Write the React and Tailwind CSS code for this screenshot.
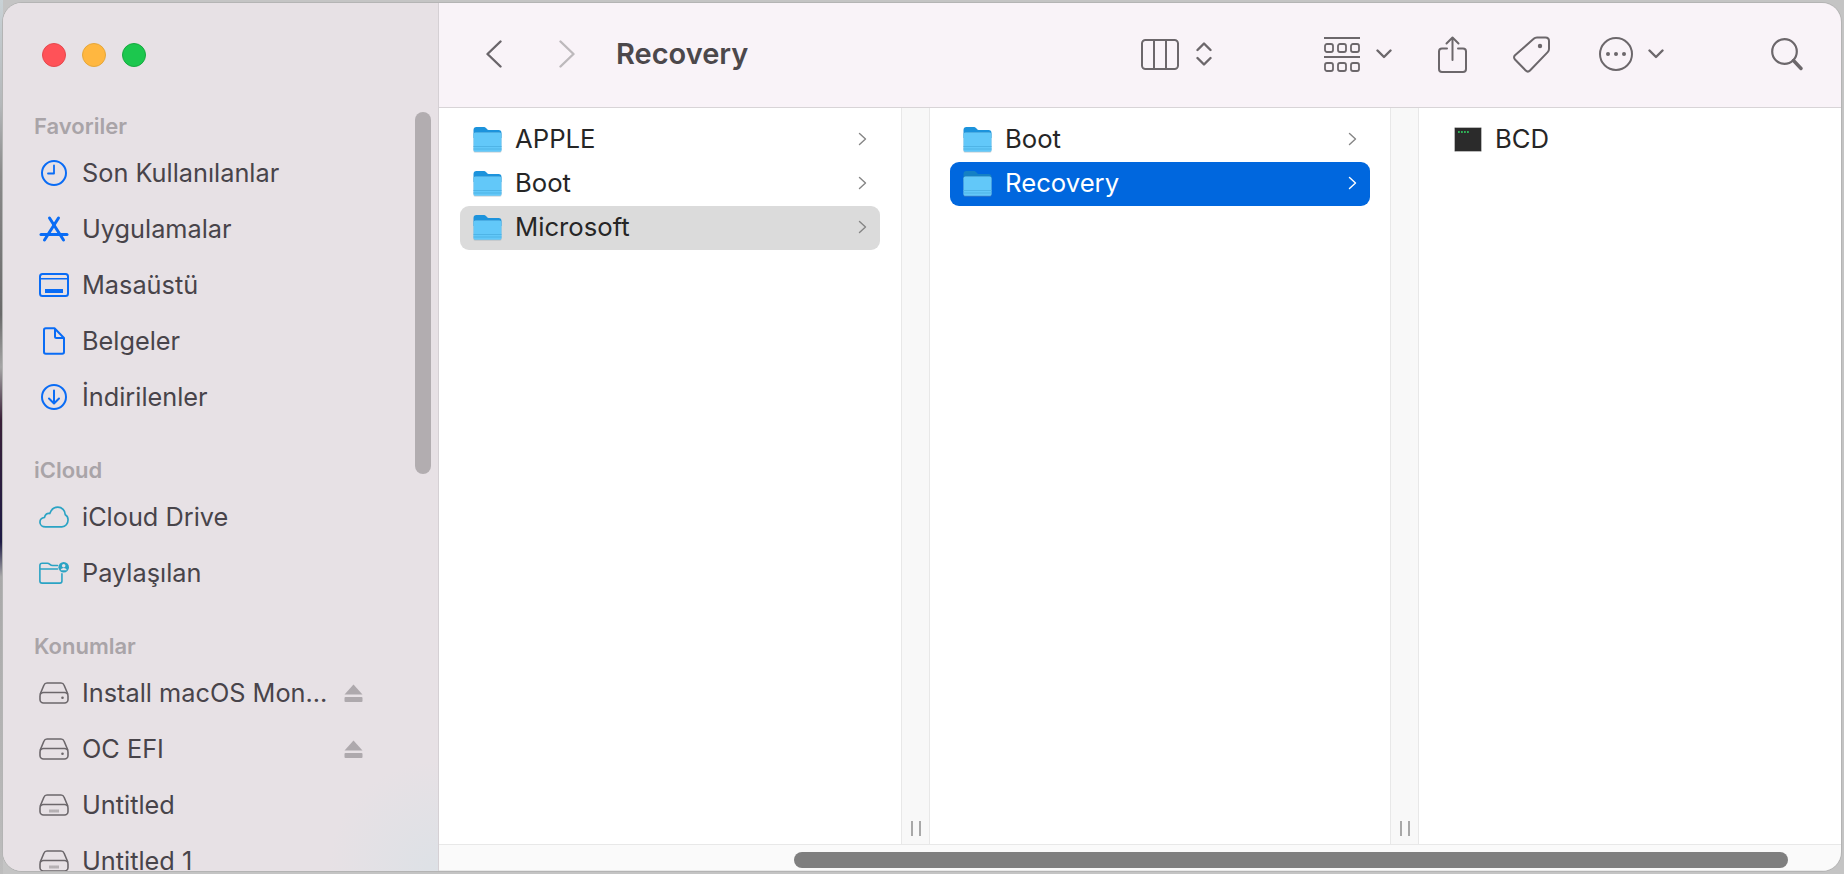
function Folder({ selected }) {
  return (
    <svg className="shrink-0" width="29" height="27" viewBox="0 0 29 27">
      <path d="M0.5 4c0-2 1-3 3-3h7c1.500 0 2 .5 3 1.500s1.500 1.500 3 1.500h9c2 0 3 1 3 3v5H.5z" fill={selected ? "#1580c4" : "#1c93dc"} />
      <rect x="0.500" y="6.500" width="28" height="20" rx="1.500" fill="#8a9aa3" opacity="0.500" />
      <path d="M0.500 8.500c0-1.200.8-2 2-2h24c1.200 0 2 .8 2 2v15.500c0 1-.8 1.800-2 1.800h-24c-1.200 0-2-.8-2-1.800z" fill="#62c8f9" />
      <rect x="0.500" y="20" width="28" height="1" fill="#4fb4e6" />
      <rect x="0.500" y="22.500" width="28" height="1" fill="#4fb4e6" />
    </svg>
  );
}

function TerminalFile() {
  return (
    <svg className="shrink-0" width="28" height="25" viewBox="0 0 28 25">
      <rect x="0.500" y="0.500" width="27" height="24" rx="1" fill="#2b2b2b" stroke="#b9b9b9" />
      <rect x="4" y="4" width="1.800" height="2" fill="#2fb457" />
      <rect x="7" y="4" width="1.800" height="2" fill="#2fb457" />
      <rect x="10" y="4" width="1.800" height="2" fill="#2fb457" />
      <rect x="13" y="4" width="1.800" height="2" fill="#2fb457" />
    </svg>
  );
}

function RowChevron({ selected }) {
  return (
    <svg width="9" height="14" viewBox="0 0 9 14" fill="none" stroke={selected ? "#ffffff" : "#858585"} strokeWidth="1.400" strokeLinecap="round" strokeLinejoin="round">
      <path d="M1.500 1.500 7.500 7l-6 5.500" />
    </svg>
  );
}

function Row({ name, active, selected, icon }) {
  return (
    <div
      className={
        "flex h-[44px] items-center rounded-[9px] pb-[2px] pl-[13px] pr-[13px] " +
        (selected ? "bg-[#0067de] text-white " : active ? "bg-[#dbdbdb] text-[#262626] " : "text-[#262626] ")
      }
    >
      {icon || <Folder selected={selected} />}
      <span className="ml-[13px] flex-1 text-[25.700px] leading-none">{name}</span>
      {!icon && <RowChevron selected={selected} />}
    </div>
  );
}

function Gutter() {
  return (
    <div className="flex w-[29px] shrink-0 items-end justify-center gap-[6px] border-x border-[#e8e8e8] bg-[#f8f8f8] pb-[8px]">
      <div className="h-[15px] w-[2px] bg-[#a8a8a8]" />
      <div className="h-[15px] w-[2px] bg-[#a8a8a8]" />
    </div>
  );
}

const blue = "#0a6cf5";
const teal = "#2aa3c4";
const gray = "#6c676b";

const sideIcons = {
  clock: (
    <svg width="30" height="28" viewBox="0 0 30 28" fill="none" stroke={blue} strokeWidth="2" strokeLinecap="round" strokeLinejoin="round">
      <circle cx="15" cy="14" r="12" />
      <path d="M15 6.500V14.500H9" strokeWidth="1.800" />
    </svg>
  ),
  apps: (
    <svg width="30" height="28" viewBox="0 0 30 28" fill="none" stroke={blue} strokeLinecap="round">
      <path d="M2 19.500H28" strokeWidth="3" />
      <path d="M10.500 3 24.500 25" strokeWidth="3" />
      <path d="M19.500 3 5.500 25" strokeWidth="3" />
    </svg>
  ),
  desktop: (
    <svg width="30" height="28" viewBox="0 0 30 28" fill="none">
      <rect x="1" y="3" width="28" height="22" rx="2.500" stroke={blue} strokeWidth="2" />
      <rect x="1.500" y="7" width="27" height="1.500" fill={blue} />
      <rect x="6" y="18" width="18" height="4" fill={blue} />
    </svg>
  ),
  doc: (
    <svg width="30" height="28" viewBox="0 0 30 28" fill="none" stroke={blue} strokeWidth="2" strokeLinejoin="round">
      <path d="M5 3c0-1 .6-1.800 1.800-1.800h8.700L25 11v14c0 1.200-.8 1.800-1.800 1.800H6.800C5.600 26.800 5 26 5 25z" />
      <path d="M16 1.500V9.500c0 1 .6 1.500 1.500 1.500H24.500" />
    </svg>
  ),
  download: (
    <svg width="30" height="28" viewBox="0 0 30 28" fill="none" stroke={blue} strokeWidth="2" strokeLinecap="round" strokeLinejoin="round">
      <circle cx="15" cy="14" r="12" />
      <path d="M15 7.500V20M10 15.500 15 20.500 20 15.500" />
    </svg>
  ),
  cloud: (
    <svg width="32" height="24" viewBox="0 0 32 24" fill="none" stroke={teal} strokeWidth="1.800" strokeLinejoin="round">
      <path d="M7 22.500C3.500 22.500 1 20.300 1 17.500c0-2.600 2-4.700 4.800-5C6.500 9 9 7.500 11.500 8.300 13 4 16.500 1.500 20 1.500c4.500 0 8 3.400 8 8 2 1 3 3.200 3 5.500 0 4-2.800 7.500-6.500 7.500z" />
    </svg>
  ),
  shared: (
    <svg width="34" height="26" viewBox="0 0 34 26" fill="none">
      <path d="M1 4.500C1 3 2 2 3.500 2h6c1.300 0 1.800.4 2.800 1.300S14 4.500 15.500 4.500H21M1 8.500H21M1 4.500V22c0 1.500 1 2.500 2.500 2.500h20c1.500 0 2.500-1 2.500-2.500v-8" stroke={teal} strokeWidth="1.800" strokeLinecap="round" />
      <circle cx="28" cy="6.500" r="6" fill={teal} />
      <circle cx="28" cy="4.700" r="2" fill="#e7e1e5" />
      <path d="M24.500 10c.5-2 2-2.800 3.500-2.800s3 .8 3.500 2.800z" fill="#e7e1e5" />
    </svg>
  ),
  disk: (
    <svg width="30" height="22" viewBox="0 0 30 22" fill="none" stroke={gray} strokeWidth="1.600" strokeLinejoin="round">
      <path d="M1 12.500 5 3c.5-1.300 1.500-2 3-2h14c1.500 0 2.500.7 3 2l4 9.500" />
      <rect x="1" y="10.500" width="28" height="10.500" rx="3.500" />
      <circle cx="23.500" cy="15.800" r="1.300" fill={gray} stroke="none" />
    </svg>
  ),
  drive: (
    <svg width="30" height="22" viewBox="0 0 30 22" fill="none" stroke={gray} strokeWidth="1.600" strokeLinejoin="round">
      <path d="M1 12.500 5 3c.5-1.300 1.500-2 3-2h14c1.500 0 2.500.7 3 2l4 9.500" />
      <rect x="1" y="10.500" width="28" height="10.500" rx="3.500" />
      <path d="M11 15.500v3M13 15.500v3M15 15.500v3M17 15.500v3M19 15.500v3" strokeWidth="0.800" />
    </svg>
  ),
};

function Eject() {
  return (
    <svg width="19" height="18" viewBox="0 0 19 18" fill="#aea9ad">
      <path d="M9.500 0.500 18.500 10.500H.5z" />
      <rect x="0.500" y="13" width="18" height="5" rx="1" />
    </svg>
  );
}

function SideItem({ icon, label, eject }) {
  return (
    <div className="flex h-[56px] items-center pl-[36px] pr-[75px] text-[#48444a]">
      <div className="flex w-[30px] shrink-0 items-center justify-center">{sideIcons[icon]}</div>
      <span className="ml-[13px] flex-1 whitespace-nowrap text-[25.300px] leading-none">{label}</span>
      {eject && <Eject />}
    </div>
  );
}

function SideHeading({ children, className }) {
  return <div className={"h-[20px] pl-[31px] text-[22px] font-semibold leading-[20px] text-[#a9a4a8] " + className}>{children}</div>;
}

function Sidebar() {
  return (
    <aside className="relative h-full w-[436px] shrink-0 overflow-hidden border-r border-[#d5d0d4] bg-[#e7e1e5] bg-[radial-gradient(circle_at_100%_100%,#dde1e6_0px,#e7e1e5_110px)]">
      <div className="flex h-[104px] items-center gap-[16px] pl-[39px]">
        <div className="h-[24px] w-[24px] rounded-full border border-[#e5484d] bg-[#ff5258]" />
        <div className="h-[24px] w-[24px] rounded-full border border-[#e5a73b] bg-[#ffb740]" />
        <div className="h-[24px] w-[24px] rounded-full border border-[#17a93f] bg-[#1cc74e]" />
      </div>
      <SideHeading className="mt-[9px]">Favoriler</SideHeading>
      <div className="mt-[9px]">
        <SideItem icon="clock" label="Son Kullanılanlar" />
        <SideItem icon="apps" label="Uygulamalar" />
        <SideItem icon="desktop" label="Masaüstü" />
        <SideItem icon="doc" label="Belgeler" />
        <SideItem icon="download" label="İndirilenler" />
      </div>
      <SideHeading className="mt-[35px]">iCloud</SideHeading>
      <div className="mt-[9px]">
        <SideItem icon="cloud" label="iCloud Drive" />
        <SideItem icon="shared" label="Paylaşılan" />
      </div>
      <SideHeading className="mt-[35px]">Konumlar</SideHeading>
      <div className="mt-[9px]">
        <SideItem icon="disk" label="Install macOS Mon..." eject />
        <SideItem icon="disk" label="OC EFI" eject />
        <SideItem icon="drive" label="Untitled" />
        <SideItem icon="drive" label="Untitled 1" />
      </div>
      {/* overlay scrollbar */}
      <div className="absolute left-[412px] top-[109px] h-[362px] w-[16px] rounded-full bg-[#b2adb0]" />
    </aside>
  );
}

function ToolChevron() {
  return (
    <svg width="16" height="10" viewBox="0 0 16 10" fill="none" stroke={gray} strokeWidth="2.400" strokeLinecap="round" strokeLinejoin="round">
      <path d="M1.500 1.500 8 8l6.500-6.500" />
    </svg>
  );
}

function Toolbar() {
  return (
    <header className="flex h-[105px] shrink-0 items-center border-b border-[#d8d4d7] bg-[#f9f3f8] pb-[2px] pl-[47px]">
      <svg width="16" height="28" viewBox="0 0 16 28" fill="none" stroke="#6a656a" strokeWidth="2.400" strokeLinecap="round" strokeLinejoin="round">
        <path d="M14.500 1.500 1.500 14l13 12.500" />
      </svg>
      <svg className="ml-[57px]" width="16" height="28" viewBox="0 0 16 28" fill="none" stroke="#bdb9bc" strokeWidth="2.400" strokeLinecap="round" strokeLinejoin="round">
        <path d="M1.500 1.500 14.500 14l-13 12.500" />
      </svg>
      <span className="ml-[41px] w-[525px] pb-[2px] text-[29px] font-semibold leading-none text-[#4c484b]">Recovery</span>
      <svg width="38" height="31" viewBox="0 0 38 31" fill="none" stroke={gray} strokeWidth="2">
        <rect x="1" y="1" width="36" height="29" rx="3.500" />
        <path d="M13 1V30M25 1V30" />
      </svg>
      <svg className="ml-[17px]" width="16" height="26" viewBox="0 0 16 26" fill="none" stroke={gray} strokeWidth="2.400" strokeLinecap="round" strokeLinejoin="round">
        <path d="M1.500 9 8 2.500 14.500 9M1.500 17 8 23.500 14.500 17" />
      </svg>
      <svg className="ml-[112px]" width="36" height="35" viewBox="0 0 36 35" fill="none" stroke={gray} strokeWidth="1.800">
        <path d="M0 1H36M0 20H36" strokeWidth="2" />
        <rect x="1" y="7" width="8" height="8" rx="2" />
        <rect x="14" y="7" width="8" height="8" rx="2" />
        <rect x="27" y="7" width="8" height="8" rx="2" />
        <rect x="1" y="26" width="8" height="8" rx="2" />
        <rect x="14" y="26" width="8" height="8" rx="2" />
        <rect x="27" y="26" width="8" height="8" rx="2" />
      </svg>
      <div className="ml-[16px]"><ToolChevron /></div>
      <svg className="ml-[46px]" width="29" height="37" viewBox="0 0 29 37" fill="none" stroke={gray} strokeWidth="2" strokeLinecap="round" strokeLinejoin="round">
        <path d="M9 12.500H4c-2 0-3 1-3 3V33c0 2 1 3 3 3h21c2 0 3-1 3-3V15.500c0-2-1-3-3-3h-5" />
        <path d="M14.500 24V1.500M8.500 7.500 14.500 1.500 20.500 7.500" />
      </svg>
      <svg className="ml-[46px]" width="37" height="37" viewBox="0 0 37 37" fill="none" stroke={gray} strokeWidth="2" strokeLinejoin="round">
        <path d="M24 1.500h8.500c2 0 3.500 1.500 3.500 3.500v8c0 1.300-.4 2.200-1.300 3.100L17 34.500c-1.300 1.300-3 1.300-4.300 0L2 23.500c-1.300-1.300-1.300-3 0-4.300L20.700 2.800c.9-.9 2-1.300 3.300-1.300z" />
        <circle cx="27" cy="10" r="2.200" fill={gray} stroke="none" />
      </svg>
      <svg className="ml-[49px]" width="34" height="34" viewBox="0 0 34 34" fill="none" stroke={gray} strokeWidth="2">
        <circle cx="17" cy="17" r="16" />
        <circle cx="9" cy="17" r="2" fill={gray} stroke="none" />
        <circle cx="17" cy="17" r="2" fill={gray} stroke="none" />
        <circle cx="25" cy="17" r="2" fill={gray} stroke="none" />
      </svg>
      <div className="ml-[15px]"><ToolChevron /></div>
      <svg className="ml-[107px]" width="32" height="33" viewBox="0 0 32 33" fill="none" stroke={gray} strokeLinecap="round">
        <circle cx="13.500" cy="13.500" r="12.300" strokeWidth="2.200" />
        <path d="M22.500 22.500 30 30.500" strokeWidth="3.400" />
      </svg>
    </header>
  );
}

function Columns() {
  return (
    <div className="flex min-h-0 flex-1 bg-white">
      <div className="w-[462px] shrink-0 pl-[21px] pr-[21px] pt-[10px]">
        <Row name="APPLE" />
        <Row name="Boot" />
        <Row name="Microsoft" active />
      </div>
      <Gutter />
      <div className="w-[460px] shrink-0 pl-[20px] pr-[20px] pt-[10px]">
        <Row name="Boot" />
        <Row name="Recovery" selected />
      </div>
      <Gutter />
      <div className="min-w-0 flex-1 pl-[22px] pr-[20px] pt-[10px]">
        <Row name="BCD" icon={<TerminalFile />} />
      </div>
    </div>
  );
}

function ScrollTrack() {
  return (
    <div className="flex h-[27px] shrink-0 items-start border-y border-[#e8e8e8] bg-[#fafafa] pt-[7px]">
      <div className="ml-[355px] h-[16px] w-[994px] rounded-full bg-[#7f7f7f]" />
    </div>
  );
}

export default function App() {
  return (
    <div className="relative h-[874px] w-[1844px] overflow-hidden bg-[#c4c4c4] p-[2px] font-['Inter','Liberation_Sans',sans-serif]">
      {/* desktop wallpaper peeking out on the left */}
      <div className="absolute left-0 top-0 h-full w-[3px] bg-[linear-gradient(to_bottom,#c9d2d6_0%,#b5b8ba_12%,#8a8a8a_20%,#6a6a6a_36%,#a5a5a5_42%,#3a2038_48%,#1d1a45_62%,#a9a9a9_66%,#bdbdbd_100%)]" />
      <div className="relative flex h-[870px] overflow-hidden rounded-[20px] border border-[#b4b4b4]">
        <Sidebar />
        <main className="flex min-w-0 flex-1 flex-col">
          <Toolbar />
          <Columns />
          <ScrollTrack />
        </main>
      </div>
    </div>
  );
}
